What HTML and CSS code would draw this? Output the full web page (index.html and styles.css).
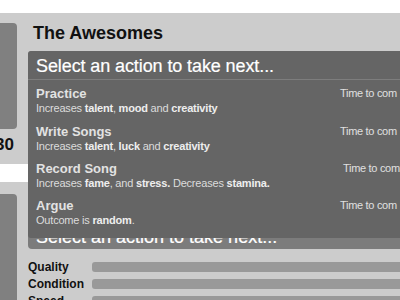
FILE: index.html
```html
<!DOCTYPE html>
<html lang="en">

<head>
    <meta charset="UTF-8">
    <title>The Awesomes</title>
    <link rel="stylesheet" href="styles.css">
</head>

<body>
    <div class="topstrip"></div>

    <div class="main">
        <!-- left sidebar, mostly off screen -->
        <div class="sidebar">
            <div class="sidecard"></div>
            <div class="score"><span>130</span></div>
            <div class="whiteband"></div>
            <div class="sidecard sidecard-low"></div>
        </div>

        <div class="content">
            <h1 class="bandname">The Awesomes</h1>

            <div class="actionpanel">
                <!-- only the bottom of the panel title peeks out under the popup -->
                <div class="actionpanel-peek">
                    <div class="actionpanel-title">Select an action to take next...</div>
                </div>

                <!-- popup over the panel -->
                <div class="actionmenu">
                    <div class="actionmenu-title">Select an action to take next...</div>

                    <div class="action">
                        <div class="action-text">
                            <p class="action-name">Practice</p>
                            <p class="action-desc">Increases <b>talent</b>, <b>mood</b> and <b>creativity</b></p>
                        </div>
                        <p class="action-time">Time to com</p>
                    </div>

                    <div class="action">
                        <div class="action-text">
                            <p class="action-name">Write Songs</p>
                            <p class="action-desc">Increases <b>talent</b>, <b>luck</b> and <b>creativity</b></p>
                        </div>
                        <p class="action-time">Time to com</p>
                    </div>

                    <div class="action">
                        <div class="action-text">
                            <p class="action-name">Record Song</p>
                            <p class="action-desc">Increases <b>fame</b>, and <b>stress.</b> Decreases <b>stamina.</b></p>
                        </div>
                        <p class="action-time action-time-shift">Time to com</p>
                    </div>

                    <div class="action">
                        <div class="action-text">
                            <p class="action-name">Argue</p>
                            <p class="action-desc">Outcome is <b>random</b>.</p>
                        </div>
                        <p class="action-time">Time to com</p>
                    </div>
                </div>
            </div>

            <div class="stats">
                <div class="stat">
                    <p class="stat-label">Quality</p>
                    <div class="stat-bar"></div>
                </div>
                <div class="stat">
                    <p class="stat-label">Condition</p>
                    <div class="stat-bar"></div>
                </div>
                <div class="stat">
                    <p class="stat-label">Speed</p>
                    <div class="stat-bar"></div>
                </div>
            </div>
        </div>
    </div>
</body>

</html>
```

FILE: styles.css
```css
body {
    margin: 0;
    background-color: #cccccc;
    font-family: "Liberation Sans", Arial, sans-serif;
    overflow: hidden;
    height: 300px;
}

p {
    margin: 0;
}

.topstrip {
    height: 13px;
    background-color: #ffffff;
}

.main {
    display: flex;
}

.sidebar {
    width: 28px;
    flex-shrink: 0;
    padding-top: 10px;
    overflow: hidden;
}

.sidecard {
    width: 17px;
    height: 106px;
    background-color: #808080;
    border-radius: 0 4px 4px 0;
}

.sidecard-low {
    margin-top: 12px;
    height: 120px;
}

.score {
    display: flex;
    justify-content: flex-end;
    width: 14px;
    margin-top: 7px;
    height: 18px;
    line-height: 18px;
    font-size: 17px;
    font-weight: bold;
    color: #111111;
    white-space: nowrap;
}

.whiteband {
    height: 18px;
    margin-top: 10px;
    background-color: #ffffff;
}

.content {
    flex: 1;
    min-width: 0;
}

.bandname {
    margin: 9px 0 7px 5px;
    font-size: 18px;
    line-height: 22px;
    color: #111111;
}

.actionpanel {
    position: relative;
    height: 198px;
    width: 420px;
    background-color: #7c7c7c;
    border-radius: 4px 0 0 4px;
    display: flex;
    flex-direction: column;
    justify-content: flex-end;
}

.actionpanel-peek {
    height: 11px;
    overflow: hidden;
}

.actionpanel-title {
    margin-top: -12px;
    padding: 0 8px;
    font-size: 18px;
    line-height: 22px;
    color: #ffffff;
    -webkit-text-stroke: 0.2px #ffffff;
}

.actionmenu {
    position: absolute;
    top: 0;
    left: 0;
    right: 0;
    height: 187px;
    background-color: #656565;
    border-radius: 3px 0 0 3px;
}

.actionmenu-title {
    padding: 4px 8px 2px;
    font-size: 18px;
    line-height: 22px;
    color: #ffffff;
    letter-spacing: -0.1px;
    -webkit-text-stroke: 0.2px #ffffff;
    border-bottom: 1px solid #7d7d7d;
}

.action {
    display: flex;
    padding: 6px 0 2px 8px;
    height: 29px;
}

.action + .action {
    padding-top: 7px;
    height: 28px;
}

.action-text {
    width: 304px;
    flex-shrink: 0;
}

.action-name {
    font-size: 13px;
    line-height: 15px;
    font-weight: bold;
    color: #e2e2e2;
}

.action-desc {
    font-size: 11px;
    line-height: 14px;
    color: #dcdcdc;
    letter-spacing: -0.2px;
}

.action-desc b {
    color: #eeeeee;
}

.action-time {
    font-size: 11px;
    line-height: 15px;
    color: #e0e0e0;
    white-space: nowrap;
    letter-spacing: -0.3px;
}

.action-time-shift {
    margin-left: 3px;
}

.stats {
    margin-top: 9px;
}

.stat {
    display: flex;
    align-items: center;
    height: 17px;
}

.stat-label {
    width: 64px;
    flex-shrink: 0;
    font-size: 12px;
    font-weight: bold;
    color: #111111;
}

.stat-bar {
    width: 320px;
    flex-shrink: 0;
    height: 10px;
    background-color: #999999;
    border-radius: 3px;
}
```
